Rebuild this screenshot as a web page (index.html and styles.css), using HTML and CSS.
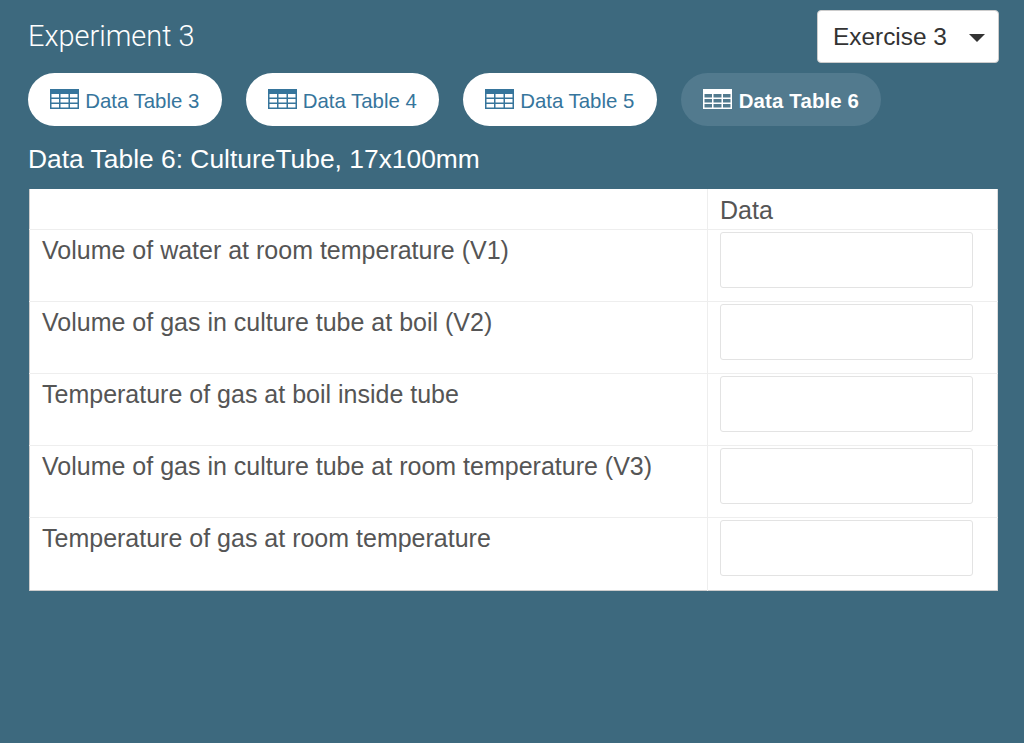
FILE: index.html
```html
<!DOCTYPE html>
<html lang="en">
<head>
<meta charset="utf-8">
<title>Experiment 3</title>
<link rel="stylesheet" href="styles.css">
</head>
<body>
<svg class="defs" width="0" height="0" aria-hidden="true">
  <symbol id="table-icon" viewBox="0 0 29 20">
    <path fill="currentColor" fill-rule="evenodd" d="M0 0H29V20H0ZM1.500 5V8.500H9V5ZM10.500 5V8.500H18.500V5ZM20 5V8.500H27.500V5ZM1.500 10V13.500H9V10ZM10.500 10V13.500H18.500V10ZM20 10V13.500H27.500V10ZM1.500 15V18.500H9V15ZM10.500 15V18.500H18.500V15ZM20 15V18.500H27.500V15Z"/>
  </symbol>
</svg>
<header class="top">
  <h1 class="title">Experiment 3</h1>
  <div class="select"><span>Exercise 3</span><i class="caret"></i></div>
</header>
<nav class="pills">
  <a class="pill"><svg class="icon"><use href="#table-icon"/></svg>Data Table 3</a>
  <a class="pill"><svg class="icon"><use href="#table-icon"/></svg>Data Table 4</a>
  <a class="pill"><svg class="icon"><use href="#table-icon"/></svg>Data Table 5</a>
  <a class="pill active"><svg class="icon"><use href="#table-icon"/></svg>Data Table 6</a>
</nav>
<h2 class="subtitle">Data Table 6: CultureTube, 17x100mm</h2>
<table class="data">
  <thead>
    <tr><th class="label"></th><th class="value">Data</th></tr>
  </thead>
  <tbody>
    <tr><td class="label">Volume of water at room temperature (V1)</td><td class="value"><input class="field" type="text"></td></tr>
    <tr><td class="label">Volume of gas in culture tube at boil (V2)</td><td class="value"><input class="field" type="text"></td></tr>
    <tr><td class="label">Temperature of gas at boil inside tube</td><td class="value"><input class="field" type="text"></td></tr>
    <tr><td class="label">Volume of gas in culture tube at room temperature (V3)</td><td class="value"><input class="field" type="text"></td></tr>
    <tr class="last"><td class="label">Temperature of gas at room temperature</td><td class="value"><input class="field" type="text"></td></tr>
  </tbody>
</table>
</body>
</html>
```
FILE: styles.css
```css
* { box-sizing: border-box; }
html, body { height: 100%; }
body {
  margin: 0;
  padding: 10px 25px 0 28px;
  background: #3d697e;
  font-family: "Liberation Sans", Arial, sans-serif;
  color: #fff;
  overflow: hidden;
}
.defs { position: absolute; }
.top {
  display: flex;
  justify-content: space-between;
  align-items: flex-start;
  height: 53px;
}
.title {
  margin: 8px 0 0;
  font-family: Roboto, "Liberation Sans", sans-serif;
  font-size: 28.9px;
  line-height: 37px;
  font-weight: 300;
}
.select {
  width: 182px;
  height: 53px;
  display: flex;
  align-items: center;
  justify-content: space-between;
  padding: 0 13px 0 15px;
  background: #fff;
  border: 1px solid #ccc;
  border-radius: 4px;
  color: #333;
  font-size: 24.4px;
}
.caret {
  width: 0;
  height: 0;
  margin-top: 2px;
  border-left: 8px solid transparent;
  border-right: 8px solid transparent;
  border-top: 8px solid #333;
}
.pills {
  display: flex;
  gap: 24px;
  margin-top: 10px;
}
.pill {
  display: flex;
  align-items: center;
  height: 53px;
  padding: 4px 22.2px 0;
  border-radius: 27px;
  background: #fff;
  color: #36759c;
  font-size: 20.4px;
}
.pill.active {
  background: #527a8e;
  color: #fff;
  font-weight: 700;
  letter-spacing: 0.15px;
}
.icon {
  width: 29px;
  height: 20px;
  margin-right: 6px;
  margin-top: -5px;
}
.active .icon { margin-right: 7px; }
.subtitle {
  margin: 16px 0 0;
  font-size: 26.4px;
  line-height: 34px;
  font-weight: 400;
}
.data {
  margin: 13px 0 0 1px;
  width: 969px;
  border-collapse: collapse;
  table-layout: fixed;
  background: #fff;
  color: #555;
  font-size: 25px;
  border-left: 1px solid #ccc;
  border-bottom: 1px solid #ccc;
  border-right: 1px solid #ddd;
}
.data th, .data td {
  padding: 0 12px;
  text-align: left;
  vertical-align: top;
  font-weight: 400;
  border-right: 1px solid #eee;
}
.data th.value, .data td.value { border-right: 0; }
.data .label { width: 678px; }
.data thead tr { height: 40px; }
.data th { padding-top: 3px; line-height: 37px; }
.data tbody tr { height: 72px; border-top: 1px solid #eee; }
.data td.label { padding-top: 5px; line-height: 30px; }
.data td.value { padding-top: 2px; padding-bottom: 13px; }
.data .last td.value { padding-bottom: 14px; }
.field {
  display: block;
  width: 253px;
  height: 56px;
  padding: 0;
  background: #fff;
  border: 1px solid #e3e3e3;
  border-radius: 3px;
}
```
